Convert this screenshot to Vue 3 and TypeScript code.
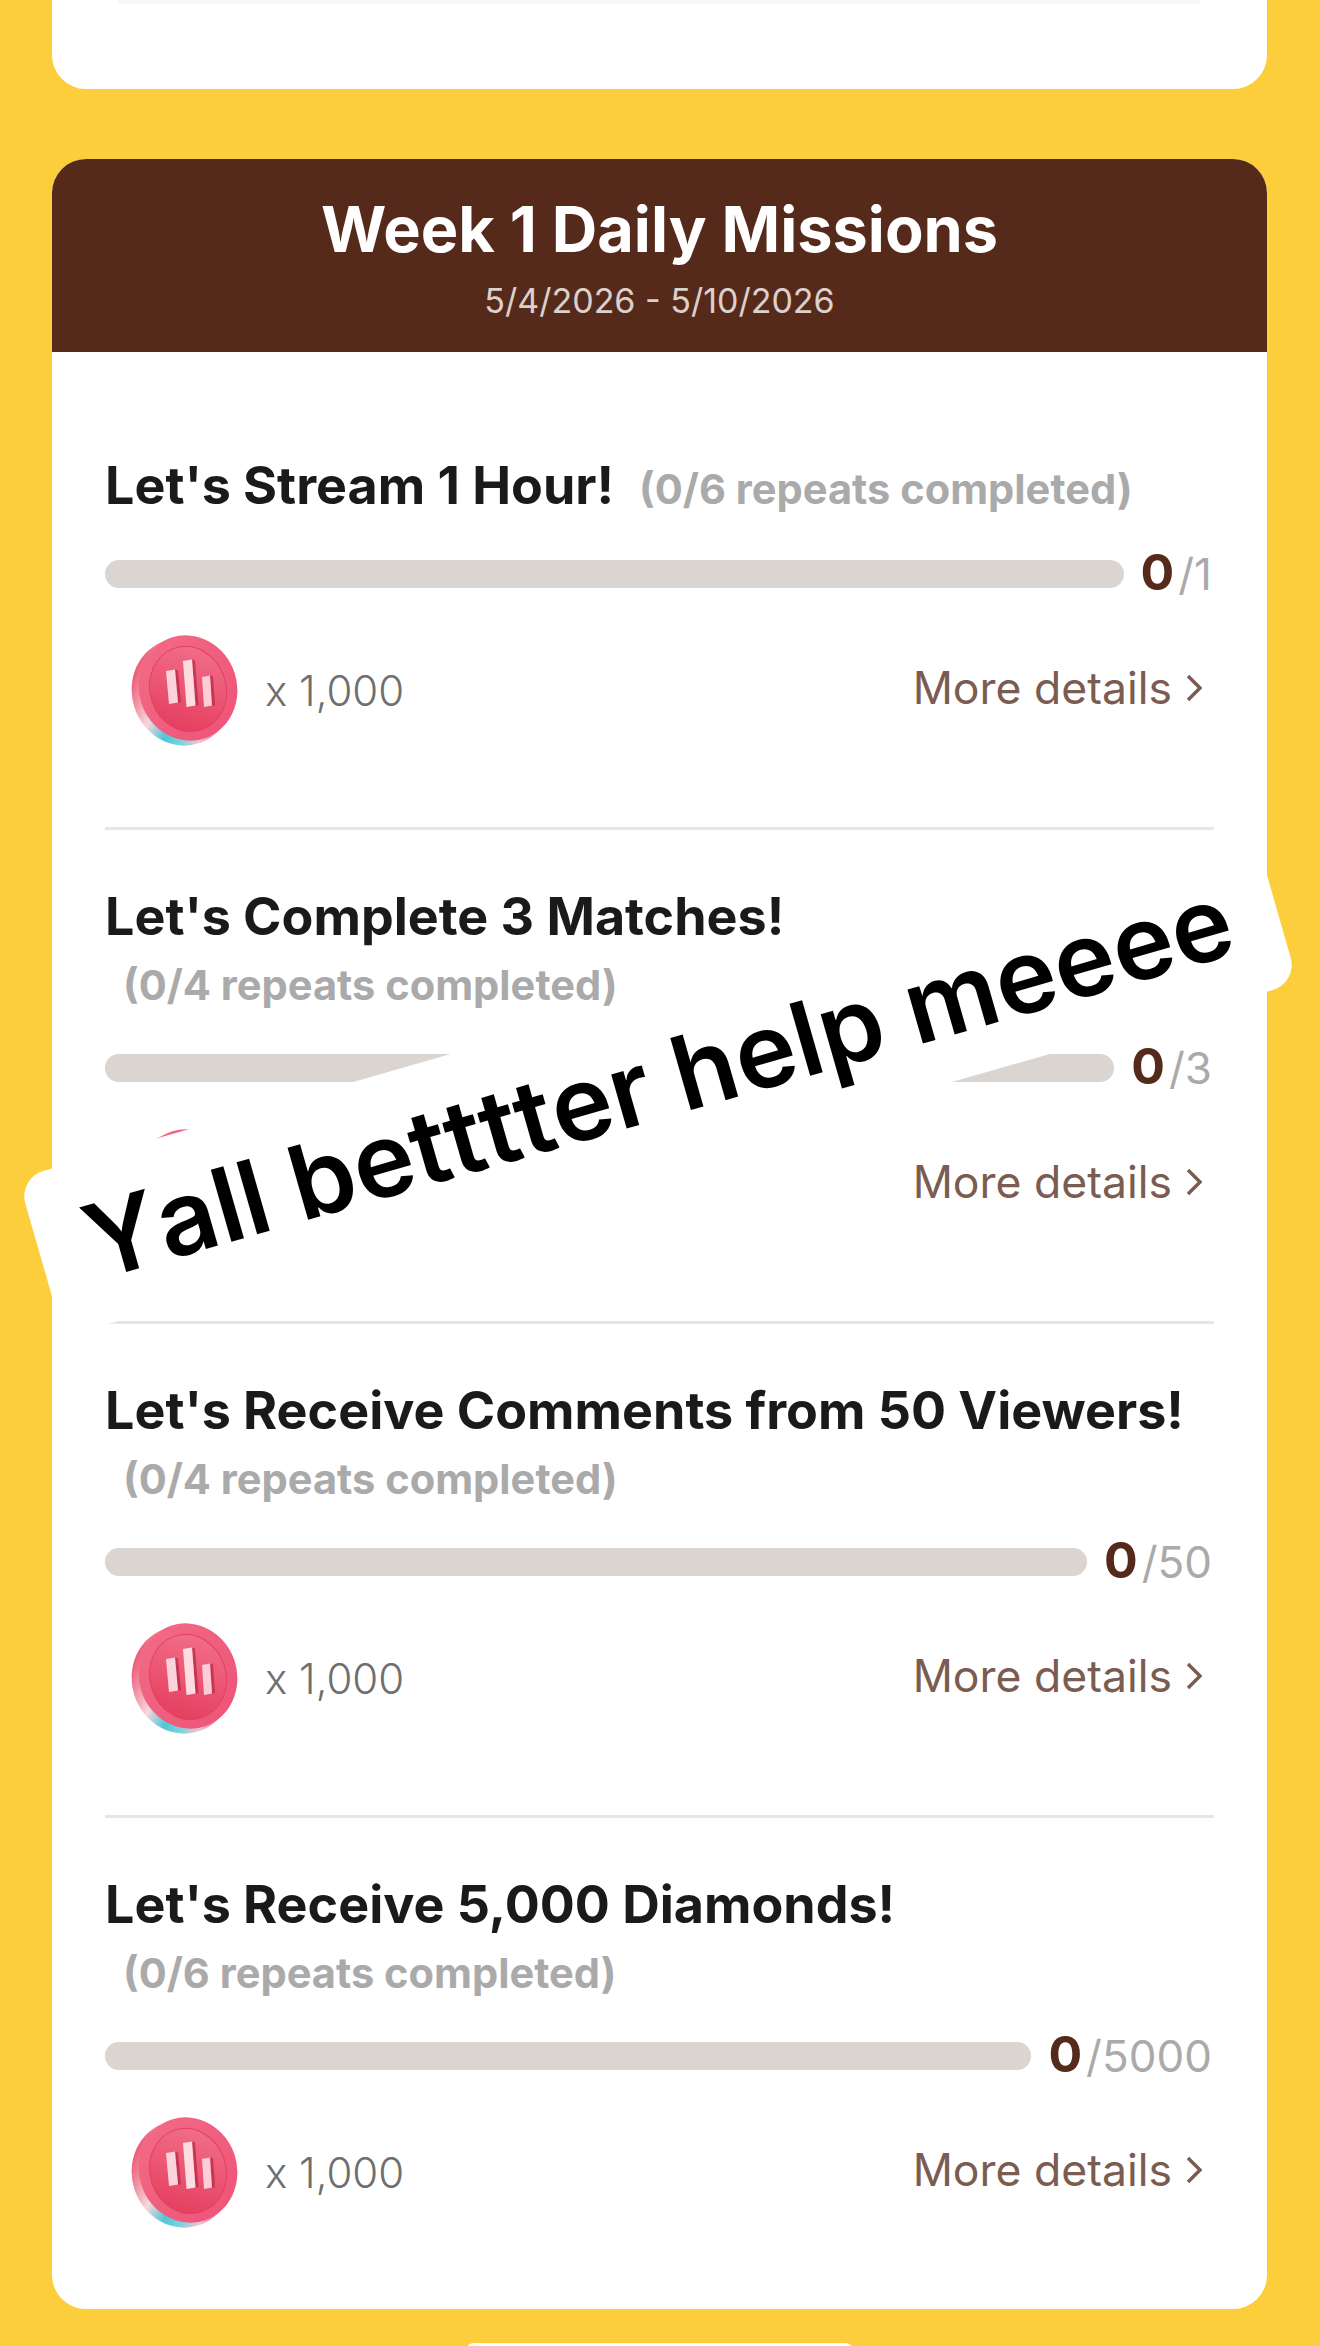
<script setup lang="ts">
interface Mission {
  title: string
  repeats: string
  target: string
}

const MISSIONS: Mission[] = [
  { title: "Let's Stream 1 Hour!", repeats: '(0/6 repeats completed)', target: '1' },
  { title: "Let's Complete 3 Matches!", repeats: '(0/4 repeats completed)', target: '3' },
  { title: "Let's Receive Comments from 50 Viewers!", repeats: '(0/4 repeats completed)', target: '50' },
  { title: "Let's Receive 5,000 Diamonds!", repeats: '(0/6 repeats completed)', target: '5000' },
]
</script>

<template>
  <div class="page">
    <div class="prev-card">
      <div class="prev-line"></div>
    </div>

    <section class="card">
      <header class="card-head">
        <h1>Week 1 Daily Missions</h1>
        <p>5/4/2026 - 5/10/2026</p>
      </header>

      <div class="card-body">
        <article v-for="m in MISSIONS" :key="m.title" class="mission">
          <div class="heading">
            <h2>{{ m.title }}</h2>
            <span class="repeats">{{ m.repeats }}</span>
          </div>

          <div class="progress">
            <div class="track"></div>
            <div class="count"><b>0</b><span>/{{ m.target }}</span></div>
          </div>

          <div class="reward-row">
            <div class="reward">
              <svg class="coin" viewBox="0 0 120 120" width="120" height="120">
                <defs>
                  <linearGradient id="rim" x1="0.02" y1="0.3" x2="0.75" y2="1">
                    <stop offset="0" stop-color="#ee5f7c" />
                    <stop offset="0.3" stop-color="#f7d8dc" />
                    <stop offset="0.5" stop-color="#4fc6d6" />
                    <stop offset="0.68" stop-color="#86d3de" />
                    <stop offset="0.82" stop-color="#f3c3d4" />
                    <stop offset="1" stop-color="#ee4f96" />
                  </linearGradient>
                  <linearGradient id="face" x1="0.2" y1="0" x2="0.8" y2="1">
                    <stop offset="0" stop-color="#f26a85" />
                    <stop offset="1" stop-color="#ee5479" />
                  </linearGradient>
                  <linearGradient id="inner" x1="0.8" y1="0" x2="0.2" y2="1">
                    <stop offset="0" stop-color="#f2708b" />
                    <stop offset="1" stop-color="#e43c5c" />
                  </linearGradient>
                </defs>
                <g filter="blur(0.5px)">
                  <ellipse cx="57" cy="62" rx="50" ry="54" transform="rotate(-18 57 62)" fill="url(#rim)" />
                  <ellipse cx="63" cy="58" rx="49" ry="53" transform="rotate(-18 63 58)" fill="url(#face)" />
                  <ellipse cx="63" cy="59" rx="38" ry="43" transform="rotate(-18 63 59)" fill="url(#inner)" stroke="#e0415f" stroke-width="1" />
                  <path d="M50 39.500 l3 1 3 32 -3 0z M67 29.500 l3 1 3.500 45 -3 0z M85 45.500 l3 1 2 29 -3 0z" fill="#b92a48" opacity="0.75" />
                  <path d="M41 41 l9 -1.500 3 33 -9 1.500z" fill="#fcd3da" />
                  <path d="M58 31 l9 -1.500 3.500 46 -9 1.500z" fill="#fdddE2" />
                  <path d="M77 47 l8 -1.500 2 30 -8 1.500z" fill="#fccdd6" />
                </g>
              </svg>
              <span class="amount">x 1,000</span>
            </div>
            <a class="details">
              More details
              <svg viewBox="0 0 16 28" width="16" height="28">
                <path d="M2 2 L14 14 L2 26" fill="none" stroke="#7b5c50" stroke-width="3.4" />
              </svg>
            </a>
          </div>
        </article>
      </div>
    </section>

    <div class="next-card"></div>

    <div class="sticker"><span>Yall betttter help meeee</span></div>
  </div>
</template>

<style scoped>
.page {
  position: relative;
  width: 1320px;
  height: 2346px;
  overflow: hidden;
  background: #fdce3c;
  font-family: Inter, "Noto Sans", sans-serif;
}

.prev-card {
  height: 89px;
  margin: 0 53px 70px 52px;
  background: #fff;
  border-radius: 0 0 34px 34px;
}

.prev-line {
  height: 4px;
  margin: 0 66px;
  background: #f7f7f7;
  border-radius: 0 0 8px 8px;
}

.card {
  margin: 0 53px 0 52px;
  background: #fff;
  border-radius: 34px;
  overflow: hidden;
}

.card-head {
  height: 193px;
  padding-top: 35px;
  box-sizing: border-box;
  background: #562a1a;
  text-align: center;
}

.card-head h1 {
  margin: 0 0 12px;
  font-size: 63px;
  line-height: 70px;
  font-weight: 700;
  color: #fff;
}

.card-head p {
  margin: 0;
  font-size: 34px;
  line-height: 50px;
  font-weight: 400;
  color: #ddd0cc;
}

.card-body {
  padding: 47px 53px 0;
}

.mission {
  padding: 57px 0 77px;
}

.mission + .mission {
  border-top: 3px solid #e6e6e6;
}

.heading {
  display: flex;
  flex-wrap: wrap;
  align-items: baseline;
  row-gap: 8px;
}

.heading h2 {
  margin: 0;
  font-size: 52px;
  line-height: 60px;
  font-weight: 700;
  color: #1a1a1a;
}

.repeats {
  margin-left: 18px;
  font-size: 41.6px;
  line-height: 60px;
  font-weight: 700;
  color: #aaa;
}

.mission:first-child .repeats {
  margin-left: 25px;
}

.progress {
  display: flex;
  align-items: center;
  gap: 17px;
  height: 50px;
  margin-top: 28px;
  padding-right: 2px;
}

.mission:first-child .progress {
  margin-top: 30px;
}

.track {
  flex: 1;
  height: 28px;
  border-radius: 14px;
  background: #dbd5d2;
}

.count {
  display: flex;
  align-items: baseline;
  gap: 4px;
  margin-top: -4px;
  font-size: 44px;
  color: #aaa;
}

.count b {
  font-size: 50px;
  font-weight: 700;
  color: #562a1a;
}

.reward-row {
  display: flex;
  align-items: center;
  justify-content: space-between;
  margin-top: 31px;
  padding: 0 12px 0 20px;
}

.reward {
  display: flex;
  align-items: center;
  gap: 20px;
}

.coin {
  display: block;
}

.amount {
  font-size: 42px;
  font-weight: 300;
  color: #6f6f6f;
}

.details {
  display: flex;
  align-items: center;
  gap: 14px;
  margin-bottom: 4px;
  font-size: 44.5px;
  color: #7b5c50;
}

.next-card {
  width: 385px;
  height: 10px;
  margin: 34px 0 0 467px;
  background: #fff;
  border-radius: 6px 6px 0 0;
}

/* the tilted caption lies over the page */
.sticker {
  position: absolute;
  left: 16px;
  top: 998px;
  width: 1284px;
  height: 165px;
  border-radius: 26px;
  background: #fff;
  transform: rotate(-16deg);
  display: flex;
  align-items: center;
  justify-content: center;
  font-family: Inter, "Liberation Sans", sans-serif;
  font-size: 103px;
  font-weight: 600;
  font-kerning: none;
  color: #000;
  white-space: nowrap;
}
</style>
